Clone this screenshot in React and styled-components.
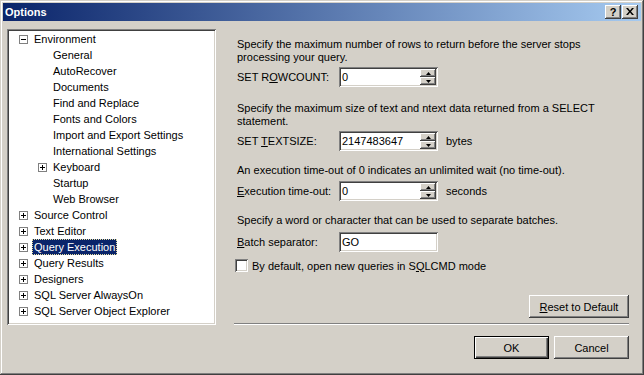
import React from 'react';
import styled, { createGlobalStyle, css } from 'styled-components';

const GlobalStyle = createGlobalStyle`
  html, body { margin: 0; padding: 0; background: #d4d0c8; }
  body { font-family: "Liberation Sans", Arial, sans-serif; font-size: 11px; color: #000; }
  * { box-sizing: border-box; }
`;

const raisedBevel = css`
  background: #d4d0c8;
  box-shadow: inset -1px -1px #404040, inset 1px 1px #ffffff,
    inset -2px -2px #808080, inset 2px 2px #d4d0c8;
`;

const sunkenBevel = css`
  box-shadow: inset 1px 1px #808080, inset -1px -1px #ffffff,
    inset 2px 2px #404040, inset -2px -2px #d4d0c8;
`;

const Window = styled.div`
  width: 644px;
  height: 375px;
  padding: 3px;
  background: #d4d0c8;
  display: flex;
  flex-direction: column;
  box-shadow: inset -1px -1px #404040, inset 1px 1px #d4d0c8,
    inset -2px -2px #808080, inset 2px 2px #ffffff;
`;

const TitleBar = styled.div`
  height: 18px;
  flex: none;
  display: flex;
  align-items: center;
  padding: 0 3px 0 2px;
  background: linear-gradient(to right, #0a246a, #a6caf0);
`;

const Title = styled.div`
  flex: 1;
  color: #fff;
  font-weight: bold;
  font-size: 11px;
  font-family: "Liberation Sans", Arial, sans-serif;
`;

const CaptionButtons = styled.div`
  display: flex;
  gap: 1px;
`;

const CaptionButton = styled.div`
  ${raisedBevel};
  width: 16px;
  height: 14px;
  display: flex;
  align-items: center;
  justify-content: center;
  font-weight: bold;
  font-size: 11px;
  line-height: 14px;
  padding-bottom: 1px;
`;

const Body = styled.div`
  flex: 1;
  display: flex;
  flex-direction: column;
  padding: 8px 12px 13px 4px;
`;

const Main = styled.div`
  display: flex;
  height: 296px;
`;

const Tree = styled.div`
  ${sunkenBevel};
  width: 209px;
  height: 296px;
  background: #fff;
  padding: 2px;
  flex: none;
`;

const TreeRow = styled.div`
  height: 16px;
  display: flex;
  align-items: center;
  gap: 4px;
  padding-left: ${(p) => 10 + p.$level * 19}px;
  white-space: nowrap;
`;

const ExpanderSlot = styled.div`
  width: 9px;
  height: 9px;
  flex: none;
  display: flex;
`;

const TreeLabel = styled.span`
  line-height: 14px;
  padding: 0 1px;
  border: 1px ${(p) => (p.$selected ? 'dotted #e8e0a0' : 'solid transparent')};
  background: ${(p) => (p.$selected ? '#0a246a' : 'transparent')};
  color: ${(p) => (p.$selected ? '#fff' : '#000')};
`;

const RightPane = styled.div`
  flex: 1;
  margin-left: 18px;
  display: flex;
  flex-direction: column;
`;

const Para = styled.div`
  line-height: 13px;
  padding-left: 3px;
  white-space: nowrap;
  margin-top: ${(p) => p.$mt}px;
`;

const FieldRow = styled.div`
  display: flex;
  align-items: center;
  height: 20px;
  padding-left: 3px;
  margin-top: ${(p) => p.$mt}px;
`;

const FieldLabel = styled.div`
  width: 102px;
  flex: none;
  white-space: nowrap;
`;

const Field = styled.div`
  ${sunkenBevel};
  width: 99px;
  height: 20px;
  background: #fff;
  padding: 2px;
  display: flex;
`;

const FieldValue = styled.div`
  flex: 1;
  padding-left: 1px;
  line-height: 16px;
`;

const Spin = styled.div`
  width: 16px;
  display: flex;
  flex-direction: column;
`;

const SpinButton = styled.div`
  ${raisedBevel};
  height: 8px;
  display: flex;
  align-items: center;
  justify-content: center;
`;

const Unit = styled.div`
  margin-left: 8px;
`;

const CheckRow = styled.div`
  display: flex;
  align-items: center;
  gap: 4px;
  padding-left: 1px;
  margin-top: ${(p) => p.$mt}px;
  white-space: nowrap;
`;

const CheckBox = styled.div`
  ${sunkenBevel};
  width: 13px;
  height: 13px;
  background: #fff;
  flex: none;
`;

const Mn = styled.span`
  text-decoration: underline;
`;

const ResetRow = styled.div`
  margin-top: auto;
  display: flex;
  justify-content: flex-end;
`;

const Separator = styled.div`
  height: 2px;
  margin-top: 5px;
  border-top: 1px solid #808080;
  border-bottom: 1px solid #ffffff;
`;

const Footer = styled.div`
  display: flex;
  justify-content: flex-end;
  gap: 5px;
  margin-top: 11px;
`;

const Button = styled.div`
  width: ${(p) => p.$w || 75}px;
  height: 23px;
  display: flex;
  align-items: center;
  justify-content: center;
  background: #d4d0c8;
  white-space: nowrap;
  box-shadow: ${(p) =>
    p.$default
      ? 'inset 1px 1px #000, inset -1px -1px #000, inset 2px 2px #fff, inset -2px -2px #404040, inset -3px -3px #808080'
      : 'inset -1px -1px #404040, inset 1px 1px #ffffff, inset -2px -2px #808080, inset 2px 2px #d4d0c8'};
`;

const Expander = ({ open }) => (
  <svg width="9" height="9" viewBox="0 0 9 9">
    <rect x="0.5" y="0.5" width="8" height="8" fill="#fff" stroke="#808080" />
    <line x1="2" y1="4.5" x2="7" y2="4.5" stroke="#000" />
    {!open && <line x1="4.5" y1="2" x2="4.5" y2="7" stroke="#000" />}
  </svg>
);

const Arrow = ({ up }) => (
  <svg width="5" height="3" viewBox="0 0 5 3">
    {up ? <polygon points="2.5,0 5,3 0,3" fill="#000" /> : <polygon points="0,0 5,0 2.5,3" fill="#000" />}
  </svg>
);

const CloseGlyph = () => (
  <svg width="8" height="7" viewBox="0 0 8 7">
    <path d="M0 0 L2 0 L4 2.5 L6 0 L8 0 L5 3.5 L8 7 L6 7 L4 4.5 L2 7 L0 7 L3 3.5 Z" fill="#000" />
  </svg>
);

const treeItems = [
  { label: 'Environment', level: 0, exp: 'open' },
  { label: 'General', level: 1 },
  { label: 'AutoRecover', level: 1 },
  { label: 'Documents', level: 1 },
  { label: 'Find and Replace', level: 1 },
  { label: 'Fonts and Colors', level: 1 },
  { label: 'Import and Export Settings', level: 1 },
  { label: 'International Settings', level: 1 },
  { label: 'Keyboard', level: 1, exp: 'closed' },
  { label: 'Startup', level: 1 },
  { label: 'Web Browser', level: 1 },
  { label: 'Source Control', level: 0, exp: 'closed' },
  { label: 'Text Editor', level: 0, exp: 'closed' },
  { label: 'Query Execution', level: 0, exp: 'closed', selected: true },
  { label: 'Query Results', level: 0, exp: 'closed' },
  { label: 'Designers', level: 0, exp: 'closed' },
  { label: 'SQL Server AlwaysOn', level: 0, exp: 'closed' },
  { label: 'SQL Server Object Explorer', level: 0, exp: 'closed' },
];

const SpinField = ({ value }) => (
  <Field>
    <FieldValue>{value}</FieldValue>
    <Spin>
      <SpinButton><Arrow up /></SpinButton>
      <SpinButton><Arrow /></SpinButton>
    </Spin>
  </Field>
);

export default function App() {
  return (
    <>
      <GlobalStyle />
      <Window>
        <TitleBar>
          <Title>Options</Title>
          <CaptionButtons>
            <CaptionButton>?</CaptionButton>
            <CaptionButton><CloseGlyph /></CaptionButton>
          </CaptionButtons>
        </TitleBar>
        <Body>
          <Main>
            <Tree>
              {treeItems.map((it) => (
                <TreeRow key={it.label} $level={it.level}>
                  <ExpanderSlot>{it.exp && <Expander open={it.exp === 'open'} />}</ExpanderSlot>
                  <TreeLabel $selected={it.selected}>{it.label}</TreeLabel>
                </TreeRow>
              ))}
            </Tree>
            <RightPane>
              <Para $mt={9}>
                Specify the maximum number of rows to return before the server stops
                <br />
                processing your query.
              </Para>
              <FieldRow $mt={3}>
                <FieldLabel>SET R<Mn>O</Mn>WCOUNT:</FieldLabel>
                <SpinField value="0" />
              </FieldRow>
              <Para $mt={15}>
                Specify the maximum size of text and ntext data returned from a SELECT
                <br />
                statement.
              </Para>
              <FieldRow $mt={3}>
                <FieldLabel>SET <Mn>T</Mn>EXTSIZE:</FieldLabel>
                <SpinField value="2147483647" />
                <Unit>bytes</Unit>
              </FieldRow>
              <Para $mt={13}>
                An execution time-out of 0 indicates an unlimited wait (no time-out).
              </Para>
              <FieldRow $mt={4}>
                <FieldLabel><Mn>E</Mn>xecution time-out:</FieldLabel>
                <SpinField value="0" />
                <Unit>seconds</Unit>
              </FieldRow>
              <Para $mt={13}>
                Specify a word or character that can be used to separate batches.
              </Para>
              <FieldRow $mt={5}>
                <FieldLabel><Mn>B</Mn>atch separator:</FieldLabel>
                <Field>
                  <FieldValue>GO</FieldValue>
                </Field>
              </FieldRow>
              <CheckRow $mt={7}>
                <CheckBox />
                <span>By default, open new queries in S<Mn>Q</Mn>LCMD mode</span>
              </CheckRow>
              <ResetRow>
                <Button $w={100}><span><Mn>R</Mn>eset to Default</span></Button>
              </ResetRow>
              <Separator />
            </RightPane>
          </Main>
          <Footer>
            <Button $default>OK</Button>
            <Button>Cancel</Button>
          </Footer>
        </Body>
      </Window>
    </>
  );
}
